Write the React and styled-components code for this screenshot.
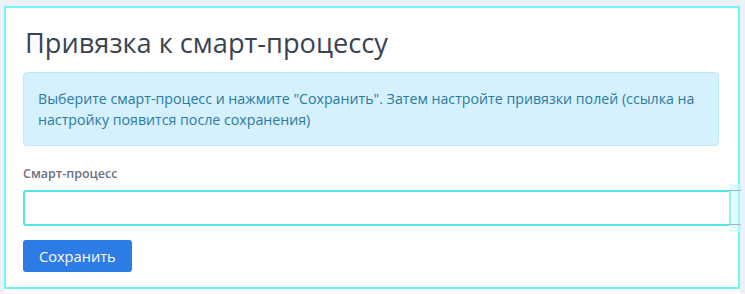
import React from 'react';
import styled, { createGlobalStyle } from 'styled-components';

const Global = createGlobalStyle`
  html, body { margin: 0; padding: 0; background: #edf0f6; }
  body { font-family: "Open Sans", "Noto Sans", sans-serif; overflow: hidden; }
`;

/* page shell */
const Page = styled.div`
  padding: 6px 5px 0 4px;
  height: 294px;
  box-sizing: border-box;
`;
const Sheet = styled.div`background: #fff; height: 100%;`;
const Card = styled.section`
  position: relative;
  border: 2px solid #6ff5f5;
  padding: 14px 19px 15px 17px;
  display: flex;
  flex-direction: column;
`;

const Title = styled.h1`
  margin: 3px 0 11px 2px;
  font-size: 27.2px;
  font-weight: 400;
  line-height: 36px;
  color: #3a4352;
`;
const Alert = styled.div`
  background: #d4f1fd;
  border: 1px solid #bde8f9;
  border-radius: 4px;
  color: #2b7aa1;
  font-size: 14.2px;
  line-height: 21px;
  padding: 15px 14px 15px 14px;
  margin-bottom: 19px;
`;
const Label = styled.label`
  font-size: 12.5px;
  font-weight: 600;
  color: #6a7280;
  margin-bottom: 8px;
`;
const FieldRow = styled.div`
  position: relative;
  margin-right: -16px;
  margin-bottom: 14px;
`;
const Input = styled.input`
  display: block;
  box-sizing: border-box;
  width: calc(100% - 4px);
  height: 36px;
  border: 2px solid #4fe6e6;
  border-radius: 3px;
  background: #fff;
  outline: none;
`;
const Ghost = styled.div`
  position: absolute;
  right: -6px;
  top: -6px;
  bottom: -6px;
  width: 12px;
  background: rgba(200, 250, 252, 0.55);
  &::before, &::after {
    content: '';
    position: absolute;
    left: 0; right: 0;
    height: 1px;
    background: #a9b0b8;
  }
  &::before { top: 6px; }
  &::after { bottom: 7px; }
`;
const Button = styled.button`
  align-self: flex-start;
  height: 32px;
  padding: 0 16px;
  border: none;
  border-radius: 3px;
  background: #2d7be5;
  color: #fff;
  font-family: inherit;
  font-size: 14.6px;
  font-weight: 500;
`;

export default function App() {
  return (
    <>
      <Global />
      <Page>
        <Sheet>
          <Card>
            <Title>Привязка к смарт-процессу</Title>
            <Alert>
              Выберите смарт-процесс и нажмите "Сохранить". Затем настройте привязки полей (ссылка на
              настройку появится после сохранения)
            </Alert>
            <Label>Смарт-процесс</Label>
            <FieldRow>
              <Input type="text" />
              <Ghost />
            </FieldRow>
            <Button>Сохранить</Button>
          </Card>
        </Sheet>
      </Page>
    </>
  );
}
